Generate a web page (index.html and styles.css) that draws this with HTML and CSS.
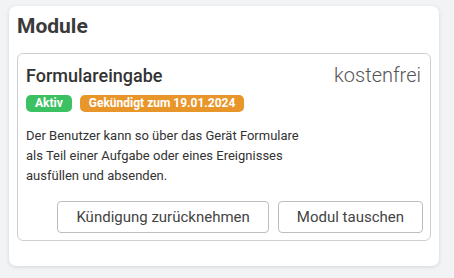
FILE: index.html
```html
<!DOCTYPE html>
<html lang="de">
<head>
<meta charset="utf-8">
<link rel="stylesheet" href="styles.css">
</head>
<body>
<section class="panel">
  <h2 class="panel-title">Module</h2>
  <div class="module-card">
    <div class="module-head">
      <h3 class="module-name">Formulareingabe</h3>
      <span class="module-price">kostenfrei</span>
    </div>
    <div class="badges">
      <span class="badge badge-green">Aktiv</span>
      <span class="badge badge-orange">Gekündigt zum 19.01.2024</span>
    </div>
    <p class="module-desc">Der Benutzer kann so über das Gerät Formulare<br>als Teil einer Aufgabe oder eines Ereignisses<br>ausfüllen und absenden.</p>
    <div class="actions">
      <button class="btn">Kündigung zurücknehmen</button>
      <button class="btn">Modul tauschen</button>
    </div>
  </div>
</section>
</body>
</html>
```

FILE: styles.css
```css
html, body {
  margin: 0;
  padding: 0;
}
body {
  background: #f2f3f4;
  font-family: Roboto, "Liberation Sans", sans-serif;
  color: #333;
  width: 454px;
  height: 278px;
  overflow: hidden;
}
.panel {
  margin: 6px 15px 0 9px;
  background: #fff;
  border-radius: 7px;
  box-shadow: 0 1px 4px rgba(0,0,0,0.12);
  padding: 8px 8px 25px 8px;
}
.panel-title {
  margin: 0 0 15px 0;
  font-size: 21px;
  font-weight: 700;
  color: #3a3a3a;
  line-height: normal;
}
.module-card {
  border: 1px solid #cfcfcf;
  border-radius: 6px;
  padding: 11px 7px 7px 8px;
}
.module-head {
  display: flex;
  justify-content: space-between;
  align-items: baseline;
}
.module-name {
  margin: 0;
  font-size: 18px;
  font-weight: 500;
  color: #333;
  line-height: 21px;
}
.module-price {
  font-size: 20px;
  font-weight: 300;
  color: #555;
  line-height: 21px;
  margin-right: 2px;
}
.badges {
  display: flex;
  gap: 8px;
  margin-top: 9px;
}
.badge {
  font-size: 12px;
  font-weight: 700;
  color: #fff;
  line-height: 17px;
  padding: 0 9px;
  border-radius: 5px;
}
.badge-green { background: #3cc162; }
.badge-orange { background: #e8962a; }
.module-desc {
  margin: 14px 0 0 0;
  font-size: 13px;
  line-height: 20px;
  color: #333;
}
.actions {
  display: flex;
  justify-content: flex-end;
  gap: 9px;
  margin-top: 15px;
}
.btn {
  font-family: Roboto, "Liberation Sans", sans-serif;
  font-size: 15px;
  color: #444;
  background: #fff;
  border: 1px solid #bdbdbd;
  border-radius: 4px;
  height: 32px;
  padding: 0 18px;
}
```
